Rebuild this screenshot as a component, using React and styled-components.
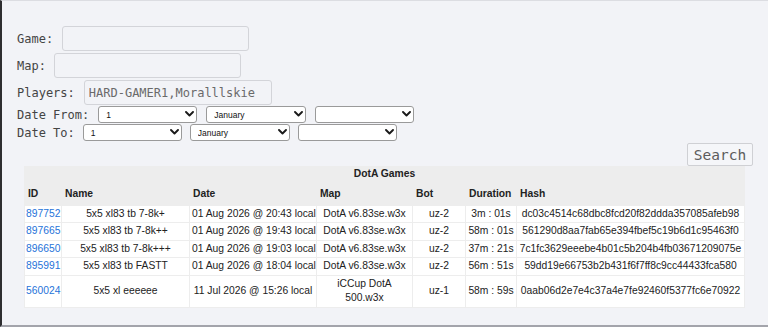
import styled, { createGlobalStyle } from "styled-components";

const Global = createGlobalStyle`
  * { box-sizing: border-box; }
  html, body { margin: 0; padding: 0; background: #f2f3f7; }
  body { overflow: hidden; }
`;

const Page = styled.div`
  height: 327px;
  background: #f2f3f7;
  border-left: 2px solid #2e2e30;
  border-top: 1px solid #dcdde2;
  border-bottom: 2px solid #a3a4ab;
  padding-top: 25px;
`;

const Form = styled.form`
  padding-left: 15px;
  display: flex;
  flex-direction: column;
  font-family: "DejaVu Sans Mono", monospace;
  font-size: 12px;
  color: #444;
`;

const Field = styled.div`
  display: flex;
  align-items: center;
  gap: ${(p) => p.$gap || 8}px;
  margin-bottom: ${(p) => p.$mb ?? 2}px;
`;

const Label = styled.label`
  white-space: pre;
  line-height: 14px;
`;

const TextInput = styled.input`
  width: ${(p) => p.$w}px;
  height: 25px;
  border: 1px solid #d3d4d9;
  border-radius: 3px;
  background: #f2f3f7;
  font-family: "DejaVu Sans Mono", monospace;
  font-size: 12px;
  color: #6a6a6a;
  padding: 0 4px;
  outline: none;
`;

const SelectWrap = styled.div`
  position: relative;
  width: ${(p) => p.$w}px;
  height: 17px;
`;

const Select = styled.select`
  appearance: none;
  width: 100%;
  height: 100%;
  border: 1px solid #9a9a9a;
  border-radius: 3px;
  background: #fff;
  font-family: "Liberation Sans", Arial, sans-serif;
  font-size: 8.5px;
  color: #111;
  padding: 0 0 0 7px;
  outline: none;
`;

const Chevron = styled.svg`
  position: absolute;
  right: 3px;
  top: 5px;
  width: 9px;
  height: 6px;
  pointer-events: none;
`;

const SearchRow = styled.div`
  display: flex;
  justify-content: flex-end;
  padding-right: 15px;
  margin-top: 1px;
`;

const SearchButton = styled.button`
  width: 66px;
  height: 23px;
  border: 1px solid #cfd0d4;
  border-radius: 2px;
  background: #f5f6f9;
  font-family: "DejaVu Sans Mono", monospace;
  font-size: 14.5px;
  color: #5c5c5c;
  padding: 0;
`;

const Panel = styled.div`
  margin-left: 22px;
  width: 721px;
  background: #ededed;
  font-family: "Liberation Sans", Arial, sans-serif;
  font-size: 10.3px;
  color: #222;
`;

const Caption = styled.div`
  text-align: center;
  font-weight: bold;
  line-height: 14.5px;
  padding-top: 1px;
  height: 17px;
`;

const Table = styled.table`
  width: 721px;
  table-layout: fixed;
  border-spacing: 1px;
  border-collapse: separate;
`;

const Th = styled.th`
  text-align: left;
  font-weight: bold;
  padding: 3px 3px;
  line-height: 14.5px;
  white-space: nowrap;
`;

const Td = styled.td`
  background: #fff;
  text-align: ${(p) => (p.$left ? "left" : "center")};
  padding: 1px ${(p) => (p.$left ? 1 : 2)}px;
  line-height: 14.5px;
  white-space: ${(p) => (p.$wrap ? "normal" : "nowrap")};
  overflow: hidden;
`;

const IdLink = styled.a`
  color: #2673d9;
  text-decoration: none;
`;

const cols = [36, 127, 126, 95, 52, 50, 227];
const headers = ["ID", "Name", "Date", "Map", "Bot", "Duration", "Hash"];

const games = [
  ["897752", "5x5 xl83 tb 7-8k+", "01 Aug 2026 @ 20:43 local", "DotA v6.83se.w3x", "uz-2", "3m : 01s", "dc03c4514c68dbc8fcd20f82ddda357085afeb98"],
  ["897665", "5x5 xl83 tb 7-8k++", "01 Aug 2026 @ 19:43 local", "DotA v6.83se.w3x", "uz-2", "58m : 01s", "561290d8aa7fab65e394fbef5c19b6d1c95463f0"],
  ["896650", "5x5 xl83 tb 7-8k+++", "01 Aug 2026 @ 19:03 local", "DotA v6.83se.w3x", "uz-2", "37m : 21s", "7c1fc3629eeebe4b01c5b204b4fb03671209075e"],
  ["895991", "5x5 xl83 tb FASTT", "01 Aug 2026 @ 18:04 local", "DotA v6.83se.w3x", "uz-2", "56m : 51s", "59dd19e66753b2b431f6f7ff8c9cc44433fca580"],
  ["560024", "5x5 xl eeeeee", "11 Jul 2026 @ 15:26 local", "iCCup DotA 500.w3x", "uz-1", "58m : 59s", "0aab06d2e7e4c37a4e7fe92460f5377fc6e70922"],
];

const months = ["January", "February", "March", "April", "May", "June", "July", "August", "September", "October", "November", "December"];

function DropDown({ width, options }) {
  return (
    <SelectWrap $w={width}>
      <Select defaultValue={options[0]}>
        {options.map((o) => (
          <option key={o}>{o}</option>
        ))}
      </Select>
      <Chevron viewBox="0 0 9 6">
        <path d="M1 1l3.5 3.5L8 1" fill="none" stroke="#1a1a1a" strokeWidth="1.9" strokeLinecap="round" strokeLinejoin="round" />
      </Chevron>
    </SelectWrap>
  );
}

function DateRow({ label, gap }) {
  const days = Array.from({ length: 31 }, (_, i) => String(i + 1));
  return (
    <Field $gap={gap} $mb={1}>
      <Label>{label}</Label>
      <DropDown width={99} options={days} />
      <DropDown width={100} options={months} />
      <DropDown width={99} options={[""]} />
    </Field>
  );
}

export default function App() {
  return (
    <>
      <Global />
      <Page>
        <Form onSubmit={(e) => e.preventDefault()}>
          <Field $gap={9}>
            <Label>Game:</Label>
            <TextInput $w={187} />
          </Field>
          <Field $gap={8}>
            <Label>Map:</Label>
            <TextInput $w={187} />
          </Field>
          <Field $gap={9} $mb={1}>
            <Label>Players:</Label>
            <TextInput $w={188} defaultValue="HARD-GAMER1,Moralllskie" />
          </Field>
          <DateRow label="Date From:" gap={9} />
          <DateRow label="Date To:" gap={8} />
        </Form>
        <SearchRow>
          <SearchButton>Search</SearchButton>
        </SearchRow>
        <Panel>
          <Caption>DotA Games</Caption>
          <Table>
            <colgroup>
              {cols.map((w, i) => (
                <col key={i} style={{ width: w }} />
              ))}
            </colgroup>
            <thead>
              <tr>
                {headers.map((h) => (
                  <Th key={h}>{h}</Th>
                ))}
              </tr>
            </thead>
            <tbody>
              {games.map((g) => (
                <tr key={g[0]}>
                  <Td $left>
                    <IdLink href="#">{g[0]}</IdLink>
                  </Td>
                  <Td>{g[1]}</Td>
                  <Td>{g[2]}</Td>
                  <Td $wrap>{g[3]}</Td>
                  <Td>{g[4]}</Td>
                  <Td>{g[5]}</Td>
                  <Td>{g[6]}</Td>
                </tr>
              ))}
            </tbody>
          </Table>
        </Panel>
      </Page>
    </>
  );
}
